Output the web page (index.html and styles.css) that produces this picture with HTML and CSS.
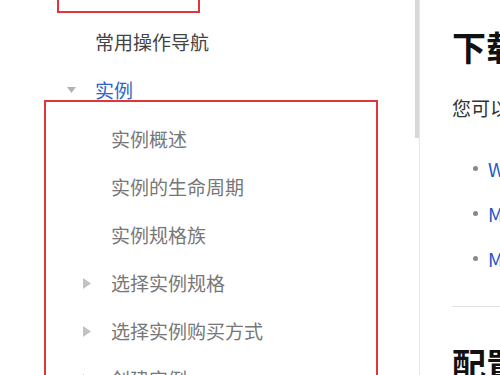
FILE: index.html
```html
<!DOCTYPE html>
<html lang="zh">
  <head>
    <meta name="viewport" content="width=device-width, initial-scale=1">
    <title>实例 - 文档</title>
    <link rel="stylesheet" href="styles.css">
  </head>
  <body>
  <div id="page">
    <div id="sidebar">
      <div class="scroll-thumb"></div>
      <!-- previous highlighted group, scrolled mostly out of view -->
      <div class="mark-top"></div>
      <div class="item top first">常用操作导航</div>
      <div class="item top open">
        <svg class="caret" width="9" height="6" viewBox="0 0 9 6"><path d="M0 0H9L4.5 6Z" fill="#b3b3b3"/></svg>
        <span>实例</span>
      </div>
      <div class="mark-group">
        <div class="item sub">实例概述</div>
        <div class="item sub">实例的生命周期</div>
        <div class="item sub">实例规格族</div>
        <div class="item sub folded">
          <svg class="caret" width="8" height="11" viewBox="0 0 8 11"><path d="M0 0L8 5.5L0 11Z" fill="#c2c2c2"/></svg>
          <span>选择实例规格</span>
        </div>
        <div class="item sub folded">
          <svg class="caret" width="8" height="11" viewBox="0 0 8 11"><path d="M0 0L8 5.5L0 11Z" fill="#c2c2c2"/></svg>
          <span>选择实例购买方式</span>
        </div>
        <div class="item sub folded">
          <svg class="caret" width="8" height="11" viewBox="0 0 8 11"><path d="M0 0L8 5.5L0 11Z" fill="#c2c2c2"/></svg>
          <span>创建实例</span>
        </div>
      </div>
    </div>
    <div id="content">
      <h1>下载安装包</h1>
      <p>您可以根据操作系统选择对应的客户端下载。</p>
      <ul class="links">
        <li><a href="#">Windows 客户端</a></li>
        <li><a href="#">Mac OS 客户端</a></li>
        <li><a href="#">Mobile 客户端</a></li>
      </ul>
      <hr>
      <h2>配置说明</h2>
    </div>
  </div>
  </body>
</html>
```

FILE: styles.css
```css
html, body {
  margin: 0;
  padding: 0;
  width: 100%;
  height: 100%;
  overflow: hidden;
  background: #fff;
  font-family: "Noto Sans CJK SC", "Noto Sans", "Liberation Sans", sans-serif;
}

#page {
  display: flex;
  height: 100%;
}

#sidebar {
  position: relative;
  flex: 0 0 420px;
  box-sizing: border-box;
  border-right: 1px solid #e6e6e6;
  overflow: hidden;
}

.scroll-thumb {
  position: absolute;
  top: 0;
  right: 0;
  width: 4px;
  height: 138px;
  background: #d8d8d8;
}

.mark-top {
  box-sizing: border-box;
  margin-left: 57px;
  width: 143px;
  height: 13px;
  border: 2px solid #e2353b;
  border-top: none;
}

.item {
  display: flex;
  align-items: center;
  font-size: 19px;
  line-height: 20px;
  padding: 14px 0;
  white-space: nowrap;
}

.item.top {
  color: #444;
  padding-left: 95px;
}
.item.first {
  margin-top: 5px;
}

.item.open {
  padding-left: 67px;
  padding-bottom: 0;
  color: #2a66cc;
}
.item.open .caret {
  margin-right: 19px;
}

.mark-group {
  box-sizing: border-box;
  margin-left: 44px;
  width: 334px;
  padding-top: 13px;
  border: 2px solid #e2353b;
  border-bottom: none;
}

.item.sub {
  color: #777;
  padding-left: 65px;
}

.item.sub.folded {
  padding-left: 37px;
}
.item.sub.folded .caret {
  margin-right: 20px;
}

#content {
  flex: 1 1 auto;
  padding-left: 32px;
  white-space: nowrap;
  overflow: hidden;
}

h1, h2 {
  font-size: 34px;
  line-height: 44px;
  font-weight: 700;
  color: #111;
  margin: 25px 0 0;
}

h2 {
  margin-top: 35px;
}

#content p {
  font-size: 19px;
  line-height: 28px;
  color: #333;
  margin: 25px 0 0;
}

.links {
  list-style: none;
  margin: 24px 0 0;
  padding: 0;
}

.links li {
  display: flex;
  align-items: center;
  height: 45px;
  font-size: 19px;
}

.links li::before {
  content: "";
  flex: 0 0 5px;
  width: 5px;
  height: 5px;
  border-radius: 50%;
  background: #888;
  margin-left: 21px;
  margin-right: 10px;
}

.links a {
  color: #2356c8;
  text-decoration: none;
}

hr {
  border: none;
  border-top: 1px solid #e2e2e2;
  margin: 25px 0 0;
}
```
